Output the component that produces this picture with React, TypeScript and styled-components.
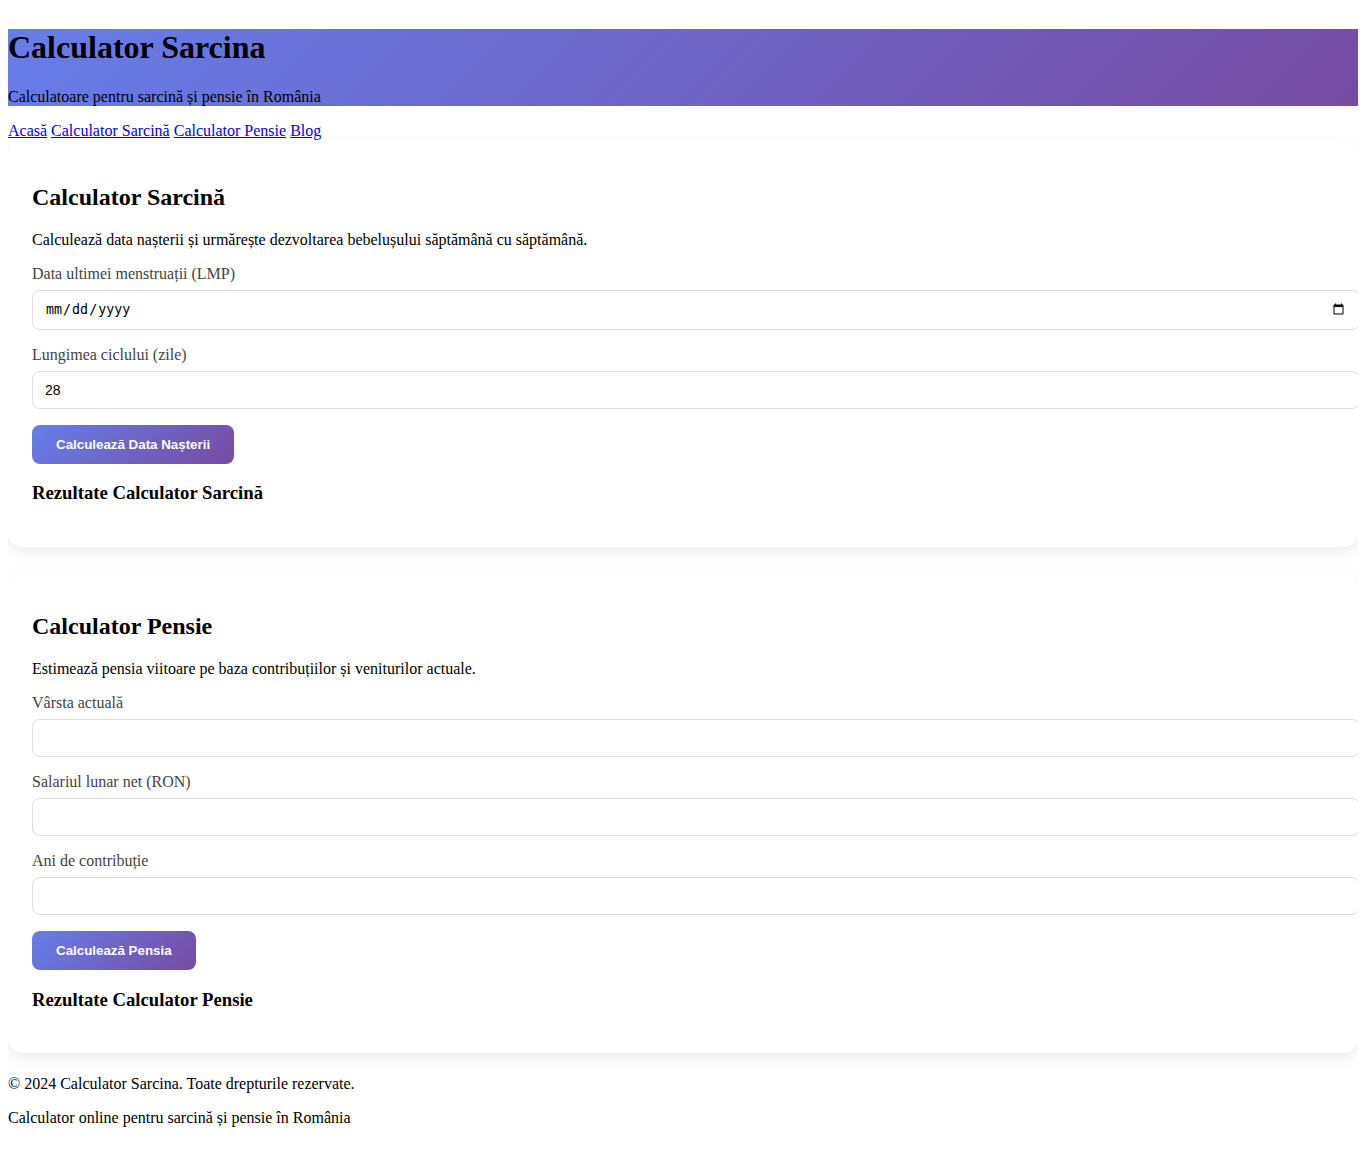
import React from "react";
import styled, { createGlobalStyle } from "styled-components";

const GlobalStyle = createGlobalStyle`
  body {
    margin: 8px;
    font-family: "Liberation Serif", "Times New Roman", serif;
    background: #ffffff;
    color: #000000;
  }
`;

const Header = styled.header`
  background: linear-gradient(135deg, #667eea 0%, #764ba2 100%);
`;

const SiteTitle = styled.h1`
  font-size: 2em;
  margin: 0.67em 0;
`;

const Tagline = styled.p`
  margin: 1em 0;
`;

const Nav = styled.nav`
  a {
    color: #0000ee;
  }
`;

const Card = styled.section`
  background: #ffffff;
  border-radius: 15px;
  padding: 24px;
  box-shadow: 0 5px 15px rgba(0, 0, 0, 0.08);
  margin-bottom: 22px;
`;

const CardTitle = styled.h2`
  font-size: 1.5em;
  margin: 0.83em 0;
`;

const Intro = styled.p`
  margin: 1em 0;
`;

const FormGroup = styled.div`
  margin-bottom: 16px;
`;

const Label = styled.label`
  display: block;
  margin-bottom: 7px;
  color: #444444;
`;

const Input = styled.input`
  width: 100%;
  box-sizing: content-box;
  padding: 10px 12px;
  border: 1px solid #dddddd;
  border-radius: 8px;
  font-family: Arial, "Liberation Sans", sans-serif;
  font-size: 14px;
  background: #ffffff;
  color: #000000;
  &[type="date"] {
    font-family: "DejaVu Sans Mono", monospace;
    font-size: 13.33px;
    height: 18px;
  }
`;

const Button = styled.button`
  background: linear-gradient(135deg, #667eea 0%, #764ba2 100%);
  color: #ffffff;
  border: none;
  border-radius: 8px;
  padding: 12px 24px;
  font-family: Arial, "Liberation Sans", sans-serif;
  font-size: 13.33px;
  font-weight: bold;
  cursor: pointer;
`;

const ResultTitle = styled.h3`
  font-size: 1.17em;
  margin: 1em 0;
`;

const Footer = styled.footer`
  p {
    margin: 1em 0;
  }
`;

export default function App() {
  return (
    <>
      <GlobalStyle />
      <Header>
        <SiteTitle>Calculator Sarcina</SiteTitle>
        <Tagline>Calculatoare pentru sarcină și pensie în România</Tagline>
      </Header>
      <Nav>
        <a href="#">Acasă</a> <a href="#">Calculator Sarcină</a>{" "}
        <a href="#">Calculator Pensie</a> <a href="#">Blog</a>
      </Nav>
      <main>
        <Card>
          <CardTitle>Calculator Sarcină</CardTitle>
          <Intro>
            Calculează data nașterii și urmărește dezvoltarea bebelușului săptămână cu
            săptămână.
          </Intro>
          <FormGroup>
            <Label htmlFor="lmp">Data ultimei menstruații (LMP)</Label>
            <Input id="lmp" type="date" />
          </FormGroup>
          <FormGroup>
            <Label htmlFor="cycle">Lungimea ciclului (zile)</Label>
            <Input id="cycle" type="number" defaultValue={28} />
          </FormGroup>
          <Button>Calculează Data Nașterii</Button>
          <ResultTitle>Rezultate Calculator Sarcină</ResultTitle>
        </Card>
        <Card>
          <CardTitle>Calculator Pensie</CardTitle>
          <Intro>
            Estimează pensia viitoare pe baza contribuțiilor și veniturilor actuale.
          </Intro>
          <FormGroup>
            <Label htmlFor="age">Vârsta actuală</Label>
            <Input id="age" type="number" />
          </FormGroup>
          <FormGroup>
            <Label htmlFor="salary">Salariul lunar net (RON)</Label>
            <Input id="salary" type="number" />
          </FormGroup>
          <FormGroup>
            <Label htmlFor="years">Ani de contribuție</Label>
            <Input id="years" type="number" />
          </FormGroup>
          <Button>Calculează Pensia</Button>
          <ResultTitle>Rezultate Calculator Pensie</ResultTitle>
        </Card>
      </main>
      <Footer>
        <p>© 2024 Calculator Sarcina. Toate drepturile rezervate.</p>
        <p>Calculator online pentru sarcină și pensie în România</p>
      </Footer>
    </>
  );
}
